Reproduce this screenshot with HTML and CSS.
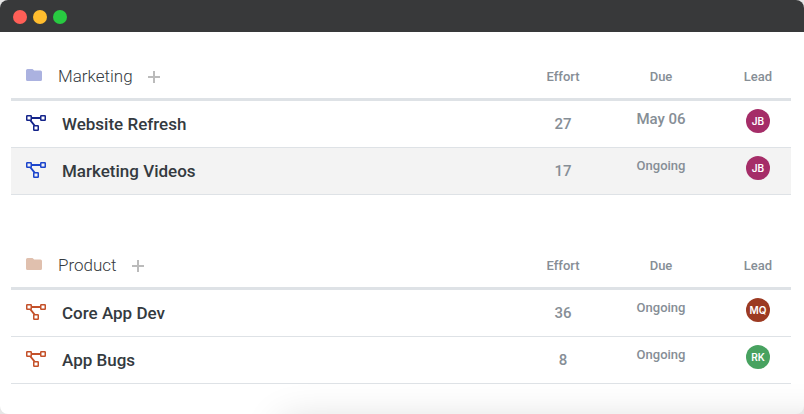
FILE: index.html
```html
<!DOCTYPE html>
<html lang="en">
  <head>
    <meta charset="utf-8"/>
    <meta name="viewport" content="width=device-width, initial-scale=1"/>
    <title>Projects</title>
    <link rel="stylesheet" href="styles.css">
  </head>
  <body>
    <svg class="sprite" aria-hidden="true">
      <symbol id="icon-folder" viewBox="0 0 16 12">
        <path d="M1.5 0h5l1.7 1.6h6.3A1.5 1.5 0 0 1 16 3.1v7.4a1.5 1.5 0 0 1-1.5 1.5h-13A1.5 1.5 0 0 1 0 10.500v-9A1.5 1.5 0 0 1 1.500 0z" fill="currentColor"/>
      </symbol>
      <symbol id="icon-project" viewBox="0 0 20 16">
        <g fill="none" stroke="currentColor">
          <path d="M5.500 3h9M4.500 5.500l4 5" stroke-width="2"/>
          <g stroke-width="1.500">
            <rect x=".75" y=".75" width="4.500" height="4.500" rx=".5"/>
            <rect x="14.750" y=".75" width="4.500" height="4.500" rx=".5"/>
            <rect x="7.750" y="10.750" width="4.500" height="4.500" rx=".5"/>
          </g>
        </g>
      </symbol>
      <symbol id="icon-plus" viewBox="0 0 12 12">
        <path d="M6 0v12M0 6h12" stroke="currentColor" stroke-width="2"/>
      </symbol>
    </svg>

    <main class="window">
      <div class="window__bar">
        <span class="window__dot window__dot--close"></span>
        <span class="window__dot window__dot--minimize"></span>
        <span class="window__dot window__dot--zoom"></span>
      </div>

      <div class="window__body">
        <table class="projects">
          <thead>
            <tr>
              <th class="projects__group" scope="col">
                <div class="group">
                  <svg class="group__icon group__icon--marketing"><use href="#icon-folder"/></svg>
                  <span class="group__name">Marketing</span>
                  <button type="button" class="group__add" aria-label="Add project"><svg class="group__plus"><use href="#icon-plus"/></svg></button>
                </div>
              </th>
              <th class="projects__effort" scope="col">Effort</th>
              <th class="projects__due" scope="col">Due</th>
              <th class="projects__lead" scope="col">Lead</th>
            </tr>
          </thead>
          <tbody>
            <tr>
              <td>
                <a class="project" href="#"><svg class="project__icon project__icon--navy"><use href="#icon-project"/></svg>Website Refresh</a>
              </td>
              <td class="projects__effort">27</td>
              <td class="projects__due projects__due--date">May 06</td>
              <td class="projects__lead"><span class="avatar avatar--jb">JB</span></td>
            </tr>
            <tr class="projects__row--active">
              <td>
                <a class="project" href="#"><svg class="project__icon project__icon--blue"><use href="#icon-project"/></svg>Marketing Videos</a>
              </td>
              <td class="projects__effort">17</td>
              <td class="projects__due">Ongoing</td>
              <td class="projects__lead"><span class="avatar avatar--jb">JB</span></td>
            </tr>
          </tbody>
        </table>

        <table class="projects">
          <thead>
            <tr>
              <th class="projects__group" scope="col">
                <div class="group">
                  <svg class="group__icon group__icon--product"><use href="#icon-folder"/></svg>
                  <span class="group__name">Product</span>
                  <button type="button" class="group__add" aria-label="Add project"><svg class="group__plus"><use href="#icon-plus"/></svg></button>
                </div>
              </th>
              <th class="projects__effort" scope="col">Effort</th>
              <th class="projects__due" scope="col">Due</th>
              <th class="projects__lead" scope="col">Lead</th>
            </tr>
          </thead>
          <tbody>
            <tr>
              <td>
                <a class="project" href="#"><svg class="project__icon project__icon--rust"><use href="#icon-project"/></svg>Core App Dev</a>
              </td>
              <td class="projects__effort">36</td>
              <td class="projects__due">Ongoing</td>
              <td class="projects__lead"><span class="avatar avatar--mq">MQ</span></td>
            </tr>
            <tr>
              <td>
                <a class="project" href="#"><svg class="project__icon project__icon--rust"><use href="#icon-project"/></svg>App Bugs</a>
              </td>
              <td class="projects__effort">8</td>
              <td class="projects__due">Ongoing</td>
              <td class="projects__lead"><span class="avatar avatar--rk">RK</span></td>
            </tr>
          </tbody>
        </table>
      </div>
    </main>
  </body>
</html>
```
FILE: styles.css
```css
* {
  box-sizing: border-box;
}

body {
  margin: 0;
  background: #E6E6E6;
  font-family: Roboto, sans-serif;
  color: #343A40;
}

.sprite {
  display: none;
}

.window {
  position: relative;
  min-height: 100vh;
  overflow: hidden;
  background: #FFF;
  border-radius: 8px;
}

/* shadow cast by the panel below the window */
.window::after {
  content: '';
  position: absolute;
  top: 100%;
  left: 282px;
  right: -40px;
  height: 40px;
  box-shadow: 0 8px 40px rgba(0, 0, 0, 0.16);
  pointer-events: none;
}

.window__bar {
  display: flex;
  align-items: center;
  gap: 6px;
  height: 32px;
  padding: 2px 13px 0;
  background: #38393A;
}

.window__dot {
  width: 14px;
  height: 14px;
  border-radius: 50%;
}

.window__dot--close {
  background: #FF5F57;
}

.window__dot--minimize {
  background: #FFBD2E;
}

.window__dot--zoom {
  background: #28CA41;
}

.window__body {
  padding: 22px 13px 30px 11px;
}

.projects {
  width: 100%;
  table-layout: fixed;
  border-spacing: 0;
}

.projects + .projects {
  margin-top: 48px;
}

.projects th {
  height: 47px;
  padding: 2px 0 0;
  border-bottom: 3px solid #DEE2E6;
  color: #868E96;
  font-size: 13px;
  font-weight: 500;
  line-height: 20px;
}

.projects td {
  height: 47px;
  padding: 8px 0 0;
  border-bottom: 1px solid #DEE2E6;
  color: #868E96;
  font-size: 13px;
  font-weight: 500;
  line-height: 20px;
  text-align: center;
  vertical-align: top;
}

.projects__effort {
  width: 68px;
}

.projects__due {
  width: 128px;
}

.projects__lead {
  width: 66px;
}

.projects td.projects__effort {
  padding-top: 13px;
  font-size: 15px;
}

.projects td.projects__due--date {
  font-size: 15px;
}

.projects__row--active {
  background: #F3F3F3;
}

.projects th.projects__group {
  padding-top: 0;
}

.group {
  display: flex;
  align-items: center;
  padding-left: 15px;
}

.group__icon {
  width: 16px;
  height: 12px;
  margin-bottom: 2px;
}

.group__icon--marketing {
  color: #ABB2E0;
}

.group__icon--product {
  color: #E0C0AE;
}

.group__name {
  margin-left: 16px;
  color: #343A40;
  font-size: 17px;
  font-weight: 300;
}

.group__add {
  display: flex;
  margin: 2px 0 0 15px;
  padding: 0;
  background: none;
  border: 0;
  color: #BBB;
  cursor: pointer;
}

.group__plus {
  width: 12px;
  height: 12px;
}

.project {
  display: flex;
  gap: 16px;
  padding: 5px 15px 0;
  color: #343A40;
  font-size: 17px;
  text-decoration: none;
}

.project__icon {
  width: 20px;
  height: 16px;
  margin-top: 1px;
}

.project__icon--navy {
  color: #14248A;
}

.project__icon--blue {
  color: #1C45CC;
}

.project__icon--rust {
  color: #C4512A;
}

.avatar {
  display: block;
  width: 24px;
  height: 24px;
  margin: 0 auto;
  border-radius: 50%;
  color: #FFF;
  font-family: Inter, sans-serif;
  font-size: 10px;
  font-weight: 600;
  line-height: 24px;
}

.avatar--jb {
  background: #A52D68;
}

.avatar--mq {
  background: #9C3A22;
}

.avatar--rk {
  background: #48A260;
}
```
